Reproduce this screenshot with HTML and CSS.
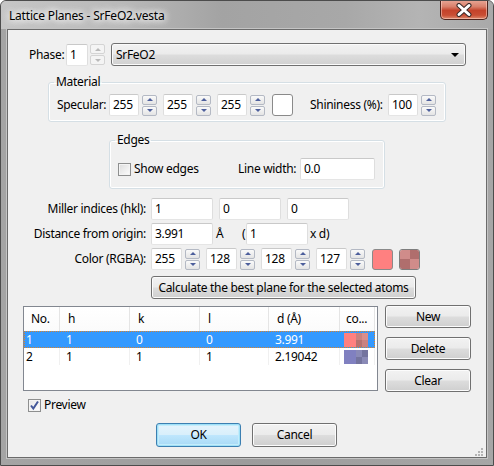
FILE: index.html
```html
<!DOCTYPE html>
<html>
<head>
<meta charset="utf-8">
<link rel="stylesheet" href="styles.css">
</head>
<body>
<div class="window">
  <div class="titlebar">
    <span class="title">Lattice Planes - SrFeO2.vesta</span>
    <div class="close">
      <svg width="20" height="14" viewBox="0 0 20 14"><path d="M5 2.5 L15 11.5 M15 2.5 L5 11.5" stroke="#3b2a28" stroke-width="5" stroke-linecap="round"/><path d="M5 2.5 L15 11.5 M15 2.5 L5 11.5" stroke="#ffffff" stroke-width="3" stroke-linecap="round"/></svg>
    </div>
  </div>
  <div class="client">
    <div class="row r-phase">
      <span class="lbl-phase">Phase:</span>
      <span class="tb w22">1</span>
      <span class="spin dis ml2"><i class="up"></i><i class="dn"></i></span>
      <span class="combo">SrFeO2<b class="arrow"></b></span>
    </div>

    <fieldset class="grp material">
      <legend>Material</legend>
      <div class="row">
        <span class="lbl-spec">Specular:</span>
        <span class="tb w30">255</span><span class="spin ml3"><i class="up"></i><i class="dn"></i></span>
        <span class="tb w30 ml6">255</span><span class="spin ml3"><i class="up"></i><i class="dn"></i></span>
        <span class="tb w30 ml6">255</span><span class="spin ml3"><i class="up"></i><i class="dn"></i></span>
        <span class="swatch white ml7"></span>
        <span class="lbl-shin">Shininess (%):</span>
        <span class="tb w30">100</span><span class="spin ml3"><i class="up"></i><i class="dn"></i></span>
      </div>
    </fieldset>

    <fieldset class="grp edges">
      <legend>Edges</legend>
      <div class="row">
        <span class="chk"></span><span class="lbl-show">Show edges</span>
        <span class="lbl-lw">Line width:</span>
        <span class="tb w75">0.0</span>
      </div>
    </fieldset>

    <div class="row r-miller">
      <span class="lbl-r">Miller indices (hkl):</span>
      <span class="tb w62">1</span>
      <span class="tb w62 ml6">0</span>
      <span class="tb w62 ml6">0</span>
    </div>
    <div class="row r-dist">
      <span class="lbl-r">Distance from origin:</span>
      <span class="tb w62">3.991</span>
      <span class="lbl-ang">Å</span>
      <span class="lbl-par">(</span>
      <span class="tb w62">1</span>
      <span class="lbl-xd">x d)</span>
    </div>
    <div class="row r-color">
      <span class="lbl-r">Color (RGBA):</span>
      <span class="tb w31">255</span><span class="spin ml3"><i class="up"></i><i class="dn"></i></span>
      <span class="tb w31 ml6">128</span><span class="spin ml3"><i class="up"></i><i class="dn"></i></span>
      <span class="tb w31 ml6">128</span><span class="spin ml3"><i class="up"></i><i class="dn"></i></span>
      <span class="tb w31 ml6">127</span><span class="spin ml3"><i class="up"></i><i class="dn"></i></span>
      <span class="swatch red ml7"></span>
      <span class="swatch checker ml5"><i></i><i></i><i></i><i></i></span>
    </div>
    <div class="row r-calc">
      <span class="btn calc">Calculate the best plane for the selected atoms</span>
    </div>

    <div class="row r-list">
      <div class="list">
        <div class="lrow hdr">
          <span class="c1">No.</span><span class="c2">h</span><span class="c3">k</span><span class="c4">l</span><span class="c5">d (Å)</span><span class="c6">co...</span>
        </div>
        <div class="lrow item sel">
          <span class="c1">1</span><span class="c2">1</span><span class="c3">0</span><span class="c4">0</span><span class="c5">3.991</span><span class="c6"><b class="cell-sw sw-red"><b class="solid"></b><b class="chq"><i></i><i></i><i></i><i></i></b></b></span>
        </div>
        <div class="lrow item">
          <span class="c1">2</span><span class="c2">1</span><span class="c3">1</span><span class="c4">1</span><span class="c5">2.19042</span><span class="c6"><b class="cell-sw sw-blue"><b class="solid"></b><b class="chq"><i></i><i></i><i></i><i></i></b></b></span>
        </div>
      </div>
      <div class="side">
        <span class="btn sbtn">New</span>
        <span class="btn sbtn">Delete</span>
        <span class="btn sbtn">Clear</span>
      </div>
    </div>

    <div class="row r-preview">
      <span class="chk on"><svg width="11" height="11" viewBox="0 0 11 11"><path d="M2 5.5 L4.3 8.5 L9 1.5" fill="none" stroke="#44589a" stroke-width="2"/></svg></span><span class="lbl-show">Preview</span>
    </div>

    <div class="row r-ok">
      <span class="btn okbtn">OK</span>
      <span class="btn cancel">Cancel</span>
    </div>
    <div class="grip">
      <svg width="10" height="10" viewBox="0 0 10 10" fill="#b4b4b4"><rect x="7" y="1" width="2" height="2"/><rect x="4" y="4" width="2" height="2"/><rect x="7" y="4" width="2" height="2"/><rect x="1" y="7" width="2" height="2"/><rect x="4" y="7" width="2" height="2"/><rect x="7" y="7" width="2" height="2"/></svg>
    </div>
  </div>
</div>
</body>
</html>
```

FILE: styles.css
```css
html, body {
  margin: 0;
  padding: 0;
}
body {
  font-family: "Noto Sans", "DejaVu Sans", sans-serif;
  font-size: 12px;
  letter-spacing: -0.3px;
  line-height: 16px;
  color: #000;
}
.window {
  box-sizing: border-box;
  width: 494px;
  height: 466px;
  border: 1px solid #4c4c4c;
  border-radius: 6px 6px 0 0;
  background: linear-gradient(90deg, #a4a4a4 0%, #9c9c9c 50%, #a6a6a6 100%);
  padding: 0 6px 7px 6px;
  display: flex;
  flex-direction: column;
  overflow: hidden;
}
.titlebar {
  height: 28px;
  display: flex;
  align-items: flex-start;
  justify-content: space-between;
  margin: 0 -6px;
  padding: 0 5px 0 7px;
  background: linear-gradient(90deg, #c6c6c6 0%, #b9b9b9 25%, #a3a3a3 45%, #a8a8a8 70%, #b4b4b4 85%, #a9a9a9 100%);
}
.title {
  margin-top: 7px;
  padding: 0 6px 0 1px;
  text-shadow: 0 0 6px #fff, 0 0 8px #fff, 0 0 10px #f4f4f4;
  font-size: 12px;
  letter-spacing: -0.2px;
}
.close {
  margin-top: -1px;
  width: 48px;
  height: 20px;
  box-sizing: border-box;
  border: 1px solid #4e241d;
  border-top: none;
  border-radius: 0 0 5px 5px;
  background: linear-gradient(#e9a898 0%, #d9806b 35%, #c4432b 55%, #c94e34 80%, #dd8a6e 100%);
  box-shadow: inset 0 0 0 1px rgba(255,220,210,0.5);
  display: flex;
  align-items: center;
  justify-content: center;
}
.client {
  flex: 1;
  box-sizing: border-box;
  background: #f0f0f0;
  border: 1px solid #6b6b6b;
  box-shadow: 0 0 0 1px #c4c4c4;
  display: flex;
  flex-direction: column;
  align-items: flex-start;
  position: relative;
}
.row {
  display: flex;
  align-items: center;
  white-space: nowrap;
}
.ml2 { margin-left: 2px; }
.ml3 { margin-left: 3px; }
.ml5 { margin-left: 6px; }
.ml6 { margin-left: 6px; }
.ml7 { margin-left: 7px; }

.tb {
  box-sizing: border-box;
  height: 22px;
  background: #fff;
  border: 1px solid;
  border-color: #c9c9c9 #dedede #e5e5e5 #dedede;
  border-radius: 2px;
  padding-left: 3px;
  line-height: 20px;
  white-space: nowrap;
}
.w22 { width: 22px; }
.w30 { width: 30px; }
.w31 { width: 31px; }
.w62 { width: 62px; }
.w75 { width: 75px; }

.spin {
  display: flex;
  flex-direction: column;
  justify-content: space-between;
  width: 15px;
  height: 21px;
}
.spin i {
  box-sizing: border-box;
  height: 10px;
  border: 1px solid #b4b9c4;
  border-radius: 2px;
  background: linear-gradient(#fafafa, #e4e4e4);
  display: flex;
  align-items: center;
  justify-content: center;
}
.spin i::after {
  content: "";
  border-left: 3px solid transparent;
  border-right: 3px solid transparent;
}
.spin .up::after { border-bottom: 3px solid #4d5f9c; }
.spin .dn::after { border-top: 3px solid #4d5f9c; }
.spin.dis i { border-color: #d4d4d4; background: #f4f4f4; }
.spin.dis .up::after { border-bottom-color: #b9b9b9; }
.spin.dis .dn::after { border-top-color: #b9b9b9; }

.r-phase {
  margin-top: 13px;
  padding-left: 21px;
  height: 23px;
}
.lbl-phase { width: 37px; }
.combo {
  margin-left: 6px;
  box-sizing: border-box;
  width: 355px;
  height: 23px;
  border: 1px solid #707070;
  border-radius: 3px;
  background: linear-gradient(#f2f2f2 0%, #ebebeb 48%, #dddddd 52%, #d0d0d0 100%);
  box-shadow: inset 0 0 0 1px #fbfbfb;
  display: flex;
  align-items: center;
  padding-left: 4px;
}
.arrow {
  margin-left: auto;
  margin-right: 6px;
  border-left: 4px solid transparent;
  border-right: 4px solid transparent;
  border-top: 4px solid #000;
}

.grp {
  box-sizing: border-box;
  border: 1px solid #d5dfe5;
  border-radius: 3px;
  box-shadow: inset 0 0 0 1px #fff;
  min-width: 0;
}
.grp legend {
  padding: 0 2px;
  margin-left: -3px;
  line-height: 16px;
}
.material {
  margin: 8px 0 0 40px;
  width: 398px;
  padding: 4px 6px 5px 8px;
}
.lbl-spec { width: 52px; }
.swatch {
  box-sizing: border-box;
  width: 21px;
  height: 21px;
  border: 1px solid #8a8a8a;
  border-radius: 3px;
}
.swatch.white { background: #fff; height: 22px; }
.lbl-shin { margin-left: 17px; width: 78px; }

.edges {
  margin: 10px 0 0 101px;
  width: 276px;
  padding: 10px 6px 8px 8px;
}
.chk {
  box-sizing: border-box;
  width: 13px;
  height: 13px;
  border: 1px solid #8e8f8f;
  background: linear-gradient(135deg, #dcdcdc, #fdfdfd);
  box-shadow: inset 0 0 0 1px #f4f4f4;
  display: flex;
  align-items: center;
  justify-content: center;
}
.chk.on { background: linear-gradient(135deg, #e6e6e6, #ffffff); }
.lbl-show { margin-left: 3px; }
.lbl-lw { margin-left: 0; width: 62px; }
.edges .lbl-show { width: 104px; }

.r-miller { margin-top: 9px; }
.lbl-r { width: 138px; text-align: right; margin-right: 5px; }
.r-dist { margin-top: 3px; }
.lbl-ang { margin-left: 3px; width: 26px; }
.lbl-par { width: 4px; }
.lbl-xd { margin-left: 2px; }
.r-color { margin-top: 3px; }
.swatch.red { background: #ff8080; }
.swatch.checker {
  display: grid;
  grid-template-columns: 1fr 1fr;
  grid-template-rows: 1fr 1fr;
  overflow: hidden;
  border-color: #7d7d7d;
}
.swatch.checker i:nth-child(1), .swatch.checker i:nth-child(4) { background: #d08c8a; }
.swatch.checker i:nth-child(2), .swatch.checker i:nth-child(3) { background: #b06e6d; }

.btn {
  box-sizing: border-box;
  border: 1px solid #707070;
  border-radius: 3px;
  background: linear-gradient(#f2f2f2 0%, #ebebeb 48%, #dddddd 52%, #cfcfcf 100%);
  box-shadow: inset 0 0 0 1px #fcfcfc;
  display: flex;
  align-items: center;
  justify-content: center;
  white-space: nowrap;
}
.r-calc { margin-top: 6px; padding-left: 143px; }
.calc { width: 265px; height: 23px; }

.r-list { margin-top: 7px; padding-left: 15px; align-items: flex-start; }
.list {
  box-sizing: border-box;
  width: 355px;
  height: 85px;
  border: 1px solid #828790;
  background: #fff;
}
.lrow {
  display: grid;
  grid-template-columns: 36px 70px 70px 69px 71px 35px;
  width: 351px;
}
.lrow > span { box-sizing: border-box; white-space: nowrap; overflow: hidden; }
.hdr { height: 24px; align-items: stretch; }
.hdr > span {
  border-right: 1px solid #e5e5e5;
  display: flex;
  align-items: center;
  padding-left: 8px;
  background: linear-gradient(#ffffff, #fbfbfb);
}
.hdr .c1 { padding-left: 7px; }
.hdr .c6 { padding-left: 6px; }
.item { height: 17px; align-items: stretch; }
.item > span {
  border-right: 1px solid #f0f0f0;
  padding-left: 6px;
  line-height: 17px;
}
.item > .c1 { padding-left: 2px; }
.item > .c6 { padding-left: 4px; display: flex; align-items: center; }
.sel {
  background: #3399ff;
  color: #fff;
  outline: 1px dotted #d9822b;
  outline-offset: -1px;
}
.sel > span { border-right-color: #3399ff; }
.cell-sw {
  display: flex;
  width: 25px;
  height: 14px;
}
.cell-sw .solid { width: 12px; height: 14px; }
.cell-sw .chq {
  display: grid;
  grid-template-columns: 6px 6px;
  grid-template-rows: 7px 7px;
}
.sw-red .solid { background: #ff8080; }
.sw-red .chq i:nth-child(1) { background: #c98280; }
.sw-red .chq i:nth-child(2) { background: #d98e8c; }
.sw-red .chq i:nth-child(3) { background: #b67270; }
.sw-red .chq i:nth-child(4) { background: #c98280; }
.sw-blue .solid { background: #8080c0; }
.sw-blue .chq i:nth-child(1) { background: #8a8ab6; }
.sw-blue .chq i:nth-child(2) { background: #74749e; }
.sw-blue .chq i:nth-child(3) { background: #74749e; }
.sw-blue .chq i:nth-child(4) { background: #8a8ab6; }

.side {
  margin-left: 7px;
  display: flex;
  flex-direction: column;
  gap: 9px;
  margin-top: -1px;
}
.sbtn { width: 86px; height: 23px; }

.r-preview { margin-top: 5px; padding-left: 20px; height: 16px; }

.r-ok { margin-top: 10px; padding-left: 148px; }
.okbtn {
  width: 85px;
  height: 24px;
  border-color: #3c7fb1;
  background: linear-gradient(#e5f4fc 0%, #d9effb 48%, #bee6fd 52%, #a7d9f5 100%);
  box-shadow: inset 0 0 0 1px #9fe0f7, inset 0 0 0 2px #c4ecfb;
}
.cancel { width: 85px; height: 24px; margin-left: 11px; }

.grip {
  position: absolute;
  right: 2px;
  bottom: 2px;
  width: 10px;
  height: 10px;
}
```
